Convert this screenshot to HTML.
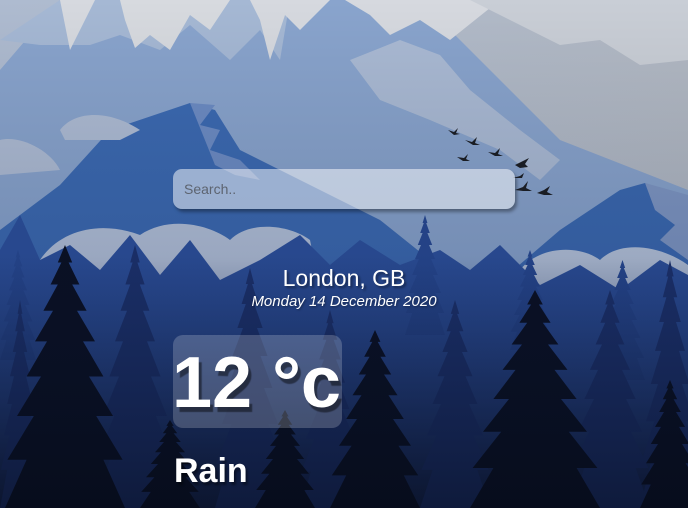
<!DOCTYPE html>
<html><head><meta charset="utf-8"><style>
html,body{margin:0;padding:0;width:688px;height:508px;overflow:hidden;font-family:"Liberation Sans",sans-serif}
svg.bg{position:absolute;left:0;top:0}
.search{position:absolute;left:173px;top:169px;width:342px;height:40px;border-radius:9px;background:rgba(255,255,255,0.5);box-shadow:2px 3px 3px rgba(0,0,0,0.35);box-sizing:border-box;padding-left:11px;line-height:40px;font-size:14px;color:#5d6470}
.city{position:absolute;left:0;width:688px;top:265px;text-align:center;color:#fff;font-size:23px;text-shadow:2px 2px 2px rgba(0,0,0,0.4)}
.date{position:absolute;left:0;width:688px;top:293px;text-align:center;color:#fff;font-size:15px;font-style:italic;text-shadow:1px 1px 2px rgba(0,0,0,0.4)}
.temp{position:absolute;left:173px;top:335px;width:169px;height:93px;border-radius:10px;background:rgba(255,255,255,0.2)}
.tt{position:absolute;left:172px;top:340px;color:#fff;font-weight:bold;font-size:72px;line-height:86px;letter-spacing:0px;text-shadow:3px 5px 1px rgba(0,0,0,0.45);white-space:nowrap}
.rain{position:absolute;left:174px;top:452px;color:#fff;font-weight:bold;font-size:34px;text-shadow:2px 3px 2px rgba(0,0,0,0.4)}
</style></head><body>
<svg class="bg" width="688" height="508" viewBox="0 0 688 508">
<defs>
<symbol id="t" viewBox="0 0 100 300" preserveAspectRatio="none">
<polygon points="50,0 56,20 53,20 62,45 56,45 68,75 60,75 75,110 65,110 82,150 70,150 90,195 76,195 98,245 82,245 100,300 0,300 18,245 2,245 24,195 10,195 30,150 18,150 35,110 25,110 40,75 32,75 44,45 38,45 47,20 44,20"/>
</symbol>
<linearGradient id="sky" x1="0" y1="0" x2="1" y2="0"><stop offset="0" stop-color="#aebbd0"/><stop offset="1" stop-color="#b2b9c4"/></linearGradient>
<linearGradient id="dk" x1="0" y1="0" x2="0" y2="1"><stop offset="0" stop-color="#000" stop-opacity="0"/><stop offset="0.5" stop-color="#0a1430" stop-opacity="0.15"/><stop offset="1" stop-color="#050a18" stop-opacity="0.6"/></linearGradient>
<linearGradient id="fg" x1="0" y1="0" x2="0" y2="1"><stop offset="0" stop-color="#1f3878" stop-opacity="0"/><stop offset="1" stop-color="#101b3c" stop-opacity="0.8"/></linearGradient>
</defs>
<rect width="688" height="508" fill="url(#sky)"/>
<polygon points="0,70 60,0 420,0 560,140 688,190 688,508 0,508" fill="#89a4cd"/>
<polygon points="0,40 30,20 60,0 290,0 280,60 260,30 230,60 190,25 160,50 120,35 90,45 40,45" fill="#a5b8d4"/>
<polygon points="60,0 95,0 80,30 70,50" fill="#d6d9df"/>
<polygon points="120,0 230,0 210,30 190,15 170,50 150,35 135,48 125,20" fill="#d7dadf"/>
<polygon points="250,0 330,0 300,30 285,15 270,60 260,20" fill="#d6d9df"/>
<polygon points="345,0 500,0 450,40 420,20 390,35 370,15" fill="#d6d9df"/>
<polygon points="470,0 688,0 688,60 640,65 600,40 560,45 520,25" fill="#c9ced6"/>
<polygon points="350,60 400,40 440,55 470,90 520,130 560,160 540,180 500,150 430,120 380,100" fill="#c0c9d8" opacity="0.6"/>
<polygon points="0,230 60,185 110,130 190,103 215,110 240,150 300,180 380,220 430,260 500,300 688,300 688,508 0,508" fill="#3c6ab2"/>
<polygon points="190,103 215,105 200,125 220,130 210,150 240,160 260,180 235,175 215,165" fill="#6d8cc4"/>
<polygon points="490,290 560,230 620,190 645,183 688,200 688,508 490,508" fill="#3b69b1"/>
<polygon points="645,183 688,195 688,260 660,240 675,225 655,210" fill="#7f97c4"/>
<path d="M40,260 C60,230 100,220 140,235 C170,215 210,225 230,240 C250,220 290,225 310,240 L320,290 L40,300Z" fill="#b4c2da"/>
<path d="M520,270 C540,245 580,245 600,260 C620,240 660,245 688,265 L688,300 L520,300Z" fill="#b7c5dc"/>
<path d="M60,130 C75,110 110,110 140,130 L120,140 L65,140Z" fill="#aebcd4"/>
<path d="M0,140 C20,135 50,150 60,170 L0,175Z" fill="#aebcd4"/>
<path d="M0,250 L20,215 40,260 70,245 100,270 130,235 160,275 190,240 220,280 260,260 300,235 330,265 360,240 400,265 440,250 470,270 500,245 540,285 580,265 620,290 660,260 688,275 L688,508 0,508Z" fill="#2d519e"/>
<g fill="#284a95">
<use href="#t" x="405" y="215" width="40" height="120"/>
<use href="#t" x="510" y="250" width="40" height="100"/>
<use href="#t" x="0" y="250" width="36" height="110"/>
<use href="#t" x="600" y="260" width="45" height="120"/>
</g>
<rect y="260" width="688" height="248" fill="url(#fg)"/>
<g fill="#1d3370">
<use href="#t" x="95" y="245" width="80" height="263"/>
<use href="#t" x="215" y="268" width="70" height="240"/>
<use href="#t" x="300" y="310" width="60" height="198"/>
<use href="#t" x="420" y="300" width="70" height="208"/>
<use href="#t" x="570" y="290" width="80" height="218"/>
<use href="#t" x="640" y="260" width="60" height="248"/>
<use href="#t" x="0" y="300" width="40" height="208"/>
</g>
<g fill="#0a1022">
<use href="#t" x="5" y="245" width="120" height="263"/>
<use href="#t" x="330" y="330" width="90" height="178"/>
<use href="#t" x="470" y="290" width="130" height="218"/>
<use href="#t" x="640" y="380" width="60" height="128"/>
<use href="#t" x="255" y="410" width="60" height="98"/>
<use href="#t" x="140" y="420" width="60" height="88"/>
</g>
<rect width="688" height="508" fill="url(#dk)"/>
<g fill="#1a1d24">
<path d="M448,130 l6,2 4,-4 -2,5 4,1 -6,1z"/>
<path d="M465,140 l7,2 5,-5 -2,6 5,2 -7,0z"/>
<path d="M488,152 l7,1 5,-5 -2,6 5,2 -8,0z"/>
<path d="M457,157 l7,1 4,-4 -2,5 4,2 -7,0z"/>
<path d="M515,165 l8,-4 6,-3 -4,6 3,3 -8,1z"/>
<path d="M513,178 l7,-2 4,-3 -2,5z"/>
<path d="M515,190 l8,-3 5,-6 -2,7 6,3 -9,0z"/>
<path d="M537,193 l7,-3 6,-4 -3,6 6,3 -9,0z"/>
</g>
</svg>
<div class="search">Search..</div>
<div class="city">London, GB</div>
<div class="date">Monday 14 December 2020</div>
<div class="temp"></div>
<div class="tt">12 °c</div>
<div class="rain">Rain</div>
</body></html>
